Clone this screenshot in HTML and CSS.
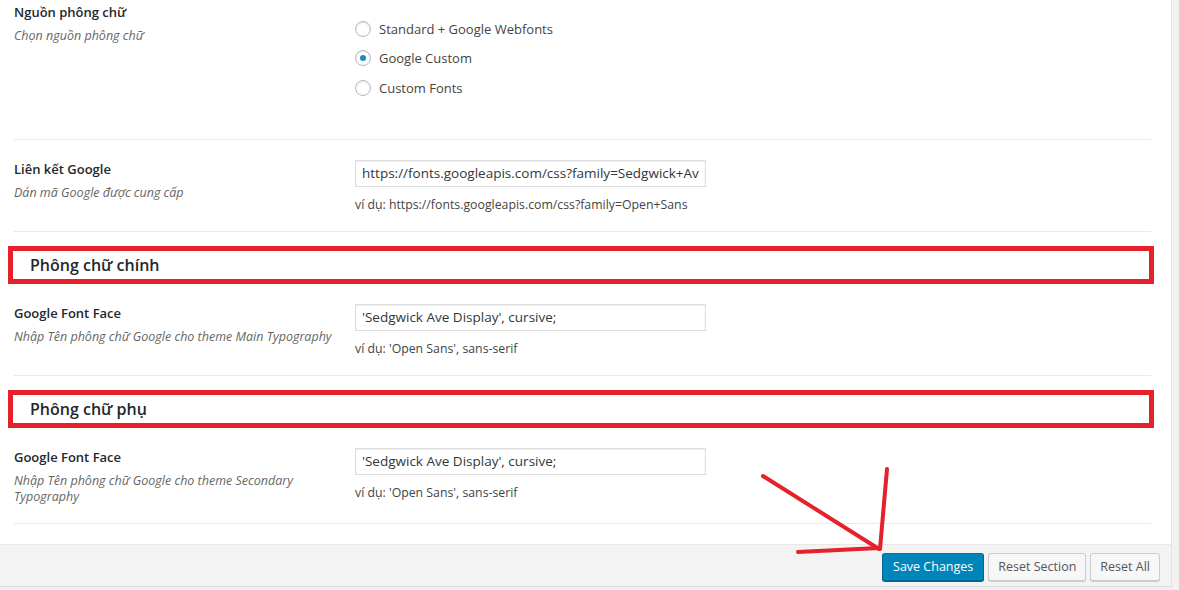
FILE: index.html
```html
<!DOCTYPE html>
<html lang="vi">
<head>
  <meta charset="UTF-8">
  <title>Typography Options</title>
  <link rel="stylesheet" href="styles.css">
</head>
<body>
  <div class="wrap">
    <div class="panel">
      <div class="row first">
        <div class="row-label">
          <h4>Nguồn phông chữ</h4>
          <span class="sub">Chọn nguồn phông chữ</span>
        </div>
        <div class="row-field">
          <ul class="radios">
            <li><span class="radio"></span>Standard + Google Webfonts</li>
            <li><span class="radio checked"></span>Google Custom</li>
            <li><span class="radio"></span>Custom Fonts</li>
          </ul>
        </div>
      </div>

      <div class="row">
        <div class="row-label">
          <h4>Liên kết Google</h4>
          <span class="sub">Dán mã Google được cung cấp</span>
        </div>
        <div class="row-field">
          <div class="text-input">https://fonts.googleapis.com/css?family=Sedgwick+Av</div>
          <div class="desc">ví dụ: https://fonts.googleapis.com/css?family=Open+Sans</div>
        </div>
      </div>

      <div class="section-head"><h3>Phông chữ chính</h3></div>

      <div class="row">
        <div class="row-label">
          <h4>Google Font Face</h4>
          <span class="sub">Nhập Tên phông chữ Google cho theme Main Typography</span>
        </div>
        <div class="row-field">
          <div class="text-input">'Sedgwick Ave Display', cursive;</div>
          <div class="desc">ví dụ: 'Open Sans', sans-serif</div>
        </div>
      </div>

      <div class="section-head"><h3>Phông chữ phụ</h3></div>

      <div class="row">
        <div class="row-label">
          <h4>Google Font Face</h4>
          <span class="sub">Nhập Tên phông chữ Google cho theme Secondary Typography</span>
        </div>
        <div class="row-field">
          <div class="text-input">'Sedgwick Ave Display', cursive;</div>
          <div class="desc">ví dụ: 'Open Sans', sans-serif</div>
        </div>
      </div>
      <div class="spacer"></div>

      <div class="footer">
        <button class="btn primary">Save Changes</button>
        <button class="btn">Reset Section</button>
        <button class="btn">Reset All</button>
      </div>
    </div>

    <!-- hand drawn arrow pointing at save -->
    <svg class="arrow" width="1179" height="590" viewBox="0 0 1179 590">
      <g stroke="#e5212b" stroke-width="4" stroke-linecap="round" fill="none">
        <line x1="763" y1="476" x2="879" y2="549"/>
        <line x1="887" y1="469" x2="880" y2="549"/>
        <line x1="798" y1="552" x2="879" y2="548"/>
      </g>
    </svg>
  </div>
</body>
</html>
```

FILE: styles.css
```css
* {
  margin: 0;
  padding: 0;
  box-sizing: border-box;
}

body {
  background: #f1f1f1;
  font-family: "Open Sans", "Noto Sans", sans-serif;
  font-size: 13px;
  color: #444;
}

.wrap {
  position: relative;
  width: 1179px;
  height: 590px;
  overflow: hidden;
}

.panel {
  width: 1172px;
  background: #fff;
  border-right: 1px solid #e2e2e2;
}

.row {
  display: flex;
  margin: 0 20px 0 14px;
  padding: 20px 0 18px;
  border-bottom: 1px solid #eaeaea;
}

.row.first {
  padding-top: 3px;
  height: 140px;
}

.row-label {
  width: 341px;
  padding-right: 14px;
}

.row-label h4 {
  font-size: 13px;
  font-weight: 600;
  color: #23282d;
  line-height: 18px;
}

.sub {
  display: block;
  margin-top: 7px;
  font-style: italic;
  color: #666;
  line-height: 16px;
  font-size: 12.5px;
}

.row-field {
  flex: 1;
}

.radios {
  list-style: none;
  margin-top: 11px;
}

.radios li {
  display: flex;
  align-items: center;
  height: 29.5px;
  color: #444;
}

.radio {
  width: 16px;
  height: 16px;
  border: 1px solid #b4b9be;
  border-radius: 50%;
  margin-right: 8px;
  box-shadow: inset 0 1px 2px rgba(0, 0, 0, 0.1);
  display: flex;
  align-items: center;
  justify-content: center;
}

.radio.checked::after {
  content: "";
  width: 6px;
  height: 6px;
  border-radius: 50%;
  background: #1e8cbe;
}

.text-input {
  width: 351px;
  height: 27px;
  border: 1px solid #ddd;
  box-shadow: inset 0 1px 2px rgba(0, 0, 0, 0.07);
  padding: 0 6px;
  line-height: 25px;
  font-size: 13.5px;
  color: #32373c;
  white-space: nowrap;
  overflow: hidden;
}

.desc {
  margin-top: 10px;
  font-size: 12.3px;
  line-height: 16px;
  color: #444;
}

.section-head {
  margin: 14px 17px 0 8px;
  height: 38px;
  border: 5px solid #e5212b;
  display: flex;
  align-items: center;
  padding-left: 17px;
}

.section-head h3 {
  font-size: 16px;
  font-weight: 600;
  color: #23282d;
}

.spacer {
  height: 20px;
}

.footer {
  background: #f3f3f3;
  border-top: 1px solid #e8e8e8;
  border-bottom: 1px solid #dcdcdc;
  height: 43px;
  display: flex;
  justify-content: flex-end;
  align-items: center;
  gap: 4px;
  padding: 2px 11px 0 0;
}

.btn {
  font-family: "Open Sans", "Noto Sans", sans-serif;
  font-size: 12.5px;
  height: 28px;
  padding: 0 9px;
  border: 1px solid #ccc;
  border-radius: 3px;
  background: #f7f7f7;
  color: #555;
  box-shadow: 0 1px 0 #ccc;
  cursor: pointer;
}

.btn.primary {
  padding: 0 10px;
  background: #0085ba;
  border-color: #0073aa #006799 #006799;
  color: #fff;
  box-shadow: 0 1px 0 #006799;
}

.arrow {
  position: absolute;
  left: 0;
  top: 0;
  pointer-events: none;
}
```
